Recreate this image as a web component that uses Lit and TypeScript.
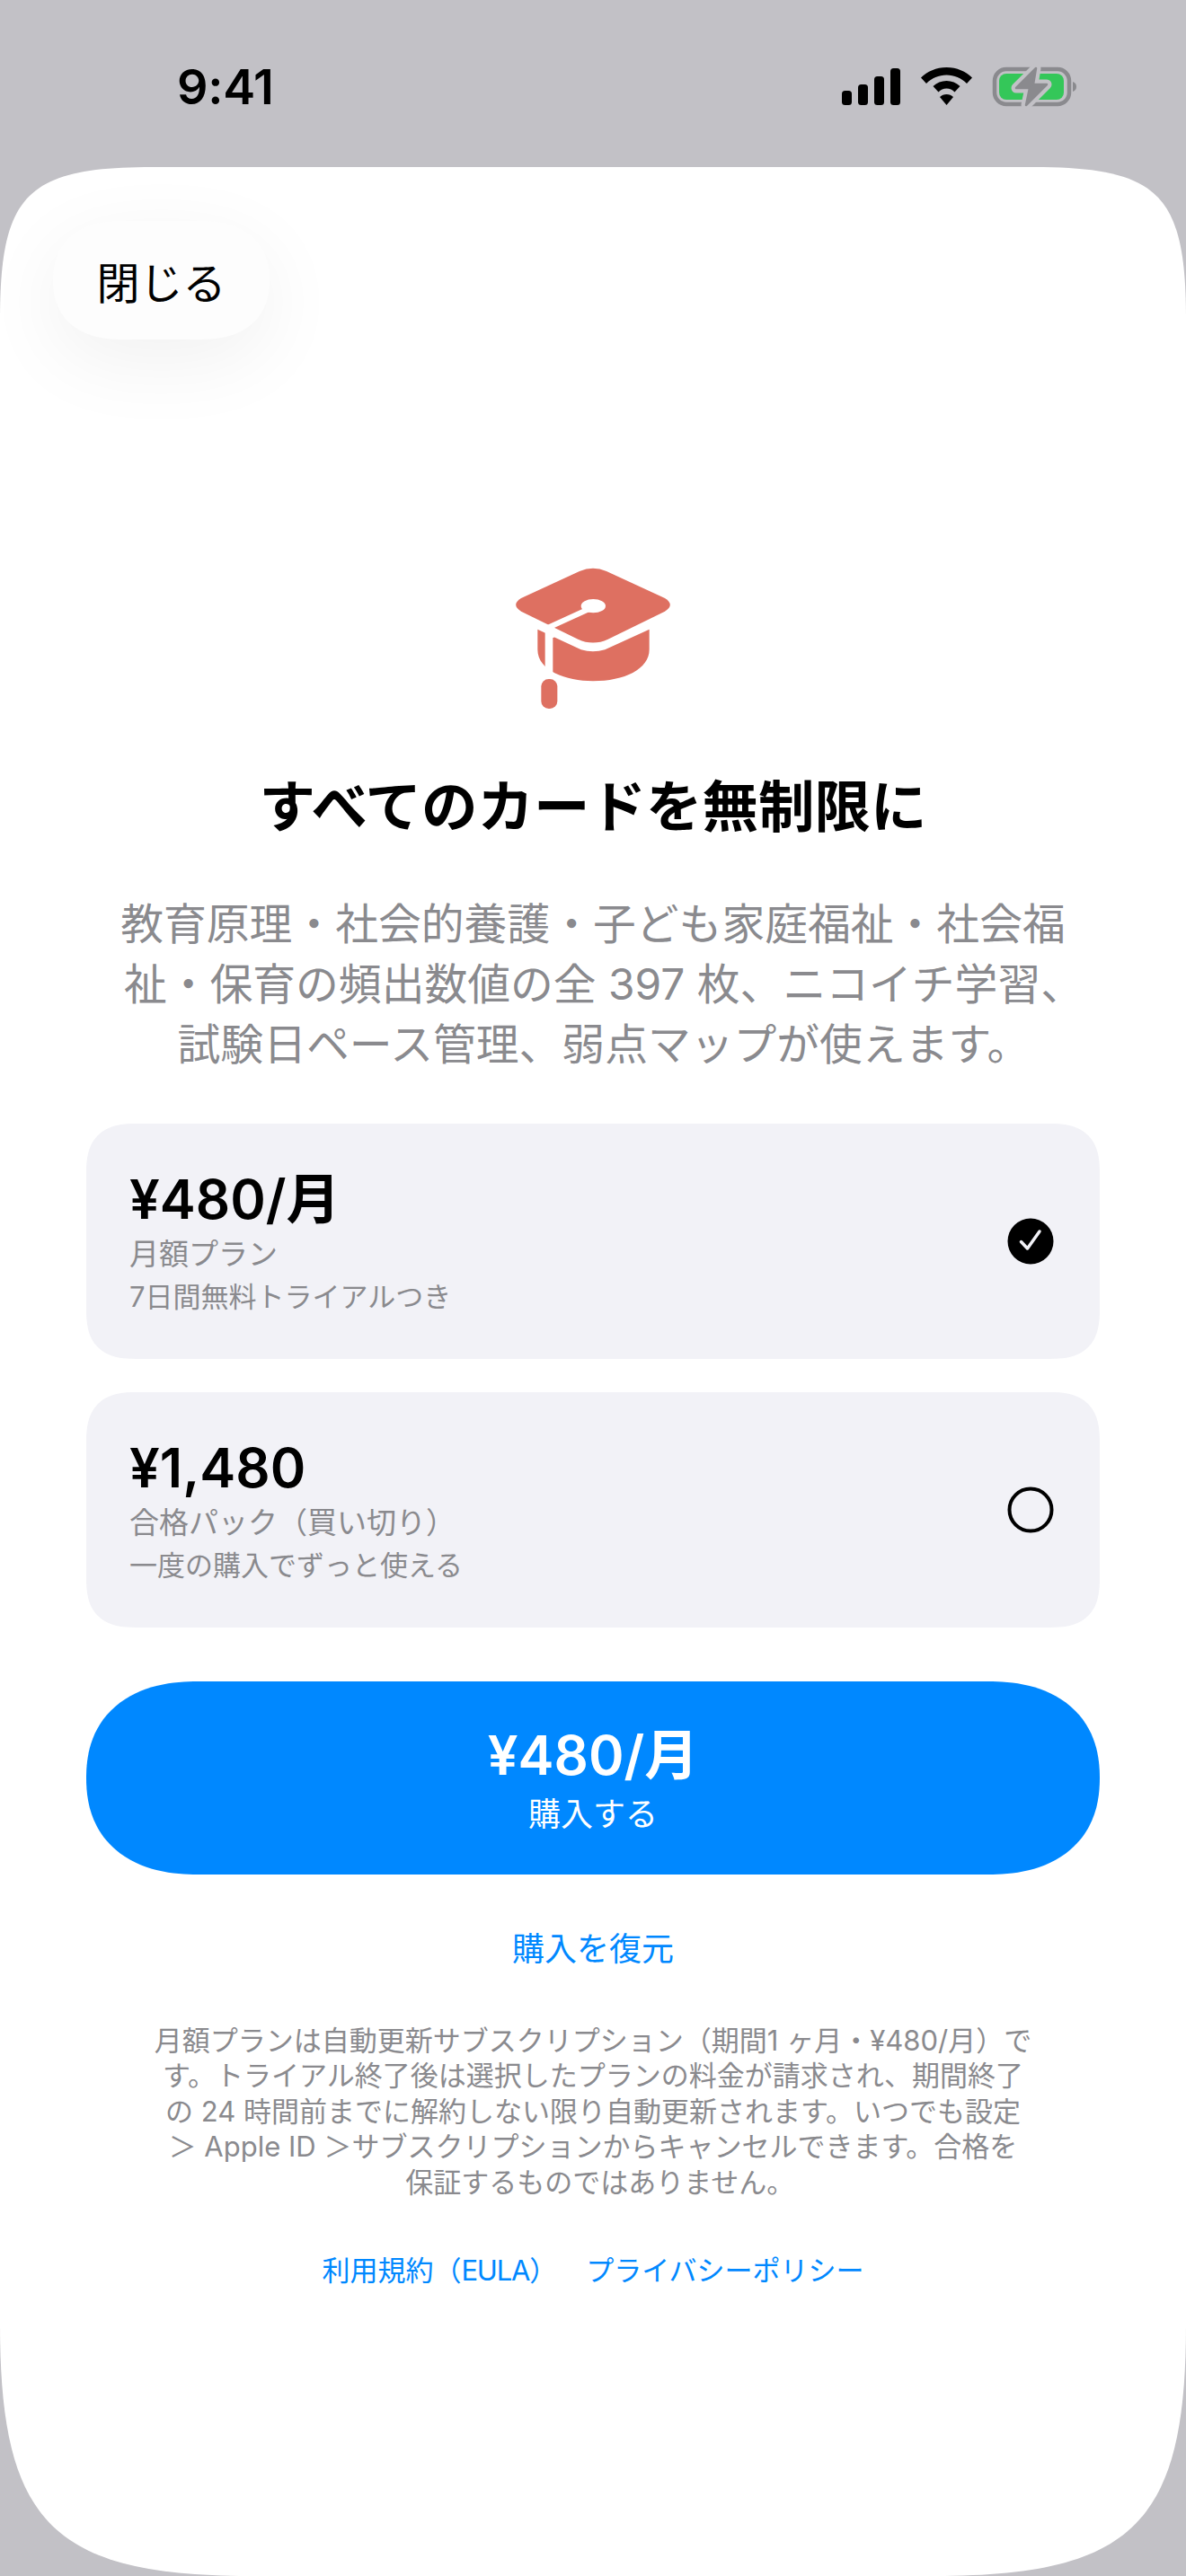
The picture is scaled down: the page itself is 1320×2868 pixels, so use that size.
import { LitElement, html, css } from "lit";
import { customElement } from "lit/decorators.js";

@customElement("app-root")
export class AppRoot extends LitElement {
  static styles = css`
    :host { display: block; width: 1320px; height: 2868px; background: #c2c1c6; overflow: hidden; font-family: "Inter", "Noto Sans CJK JP", sans-serif; }
    .status { height: 186px; box-sizing: border-box; position: relative; padding: 70px 0 0 197px; }
    .time { display: block; font-size: 54px; font-weight: 600; line-height: 54px; color: #000; letter-spacing: -0.3px; }
    .status-icons { display: block; position: absolute; left: 930px; top: 70px; }
    .sheet { height: 2682px; background: #fff; position: relative; display: flex; flex-direction: column; align-items: center; box-sizing: border-box; padding: 424px 96px 0;
      clip-path: path("M0 170 C0 30 30 0 170 0 L1150 0 C1290 0 1320 30 1320 170 L1320 2402 C1320 2623 1261 2682 1040 2682 L280 2682 C59 2682 0 2623 0 2402 Z"); }
    .close { position: absolute; left: 59px; top: 60px; width: 241px; height: 132px; border-radius: 76px / 66px; corner-shape: superellipse(1.2); background: #fdfdfd; box-shadow: 0 24px 90px rgba(0,0,0,.06); font-size: 48px; color: #000; display: flex; align-items: center; justify-content: center; }
    .cap { display: block; width: 240px; height: 200px; }
    h1 { margin: 52px 0 0; font-size: 62.5px; font-weight: 700; line-height: 72px; color: #000; text-align: center; }
    .lead { margin: 62px 0 0; font-size: 47.8px; line-height: 67px; color: #8a8a8e; text-align: center; width: 1128px; white-space: nowrap; }
    .hang { margin-right: -0.5em; }
    .cards { margin-top: 54px; width: 100%; display: flex; flex-direction: column; gap: 37px; }
    .card { height: 262px; background: #f2f2f7; border-radius: 56px; corner-shape: superellipse(1.4); display: flex; align-items: center; justify-content: space-between; padding: 0 49px 0 48px; box-sizing: border-box; }
    .price { font-size: 60px; font-weight: 600; line-height: 72px; color: #000; }
    .s1 { font-size: 33px; line-height: 42px; color: #8a8a8e; margin-top: 4px; }
    .s2 { font-size: 31px; line-height: 42px; color: #8a8a8e; margin-top: 6px; }
    .radio { display: block; width: 56px; height: 56px; }
    .buy { margin-top: 60px; width: 100%; height: 215px; border-radius: 124px / 107.5px; corner-shape: superellipse(1.2); background: #0088ff; color: #fff; display: flex; flex-direction: column; align-items: center; justify-content: center; }
    .buy .p { font-size: 60px; font-weight: 600; line-height: 72px; }
    .buy .t { font-size: 36px; line-height: 44px; margin-top: 8px; }
    .restore { margin-top: 61px; font-size: 36px; line-height: 44px; color: #0088ff; }
    .legal { margin-top: 60px; font-size: 31px; line-height: 39.4px; color: #8a8a8e; text-align: center; white-space: nowrap; }
    .links { margin-top: 59px; display: flex; gap: 32px; font-size: 31px; line-height: 40px; color: #0088ff; }
    .eula { letter-spacing: -1.2px; }
  `;

  capIcon() {
    return html`<svg class="cap" viewBox="0 0 720 600" aria-hidden="true">
      <path fill="#de7061" d="M175 272 L320 340 Q360 352 400 340 L548 272 V340 C548 405 465 445 360 445 C270 445 175 410 175 340 Z"/>
      <path fill="#de7061" d="M315 78 Q360 58 405 78 L600 168 Q635 190 600 212 L410 305 Q360 328 310 305 L120 212 Q85 190 120 168 Z"/>
      <path fill="none" stroke="#fff" stroke-width="18" d="M345 205 L207 268"/>
      <ellipse cx="361" cy="194" rx="41" ry="23" fill="#fff"/>
      <path fill="#fff" d="M198 254 L230 270 V300 H226 V440 H200 V280 L175 268 Z"/>
      <rect x="187" y="438" width="54" height="99" rx="25" fill="#de7061"/>
    </svg>`;
  }

  statusIcons() {
    return html`<svg class="status-icons" width="280" height="56" viewBox="930 70 280 56" aria-hidden="true">
      <rect x="937" y="101" width="11" height="16" rx="3.5"/><rect x="955" y="94" width="11" height="23" rx="3.5"/>
      <rect x="973" y="85" width="11" height="32" rx="3.5"/><rect x="991" y="76" width="11" height="41" rx="3.5"/>
      <path d="M1053.5 75 C1065 75 1075 79.5 1082 86.5 L1076 93 C1070 87 1062 83.5 1053.5 83.5 C1045 83.5 1037 87 1031 93 L1025 86.5 C1032 79.5 1042 75 1053.5 75 Z"/>
      <path d="M1053.5 90 C1059 90 1064.5 92 1068.5 96 L1062.5 102.5 C1060 100 1057 98.5 1053.5 98.5 C1050 98.5 1047 100 1044.5 102.5 L1038.5 96 C1042.5 92 1048 90 1053.5 90 Z"/>
      <path d="M1053.5 105 C1056.5 105 1059 106 1061 108 L1053.5 117 L1046 108 C1048 106 1050.5 105 1053.5 105 Z"/>
      <rect x="1107" y="77" width="83" height="39" rx="13" fill="none" stroke="#8a8a8e" stroke-width="4.5"/>
      <path d="M1194 91 C1197 92 1198 94 1198 96.5 C1198 99 1197 101 1194 102 Z" fill="#8a8a8e"/>
      <rect x="1112" y="82" width="72" height="29" rx="8" fill="#34c759"/>
      <path d="M1153 76 L1131 98 L1146 98 L1142 117 L1165 94 L1150 94 Z" fill="#c2c1c6" stroke="#c2c1c6" stroke-width="11" stroke-linejoin="round"/>
      <path d="M1153 76 L1131 98 L1146 98 L1142 117 L1165 94 L1150 94 Z" fill="#8a8a8e" stroke="#8a8a8e" stroke-width="2.5" stroke-linejoin="round"/>
    </svg>`;
  }

  radio(on: boolean) {
    return on
      ? html`<svg class="radio" viewBox="0 0 56 56" aria-hidden="true"><circle cx="28" cy="28" r="25.5"/><path d="M17.5 28.5 L24.5 36 L38 17" fill="none" stroke="#f2f2f7" stroke-width="3.5" stroke-linecap="round" stroke-linejoin="round"/></svg>`
      : html`<svg class="radio" viewBox="0 0 56 56" aria-hidden="true"><circle cx="28" cy="28" r="23.5" fill="none" stroke="#000" stroke-width="4"/></svg>`;
  }

  render() {
    return html`
      <div class="status"><span class="time">9:41</span>${this.statusIcons()}</div>
      <main class="sheet">
        <div class="close">閉じる</div>
        ${this.capIcon()}
        <h1>すべてのカードを無制限に</h1>
        <p class="lead">教育原理・社会的養護・子ども家庭福祉・社会福<br>祉・保育の頻出数値の全 397 枚、ニコイチ学習<span class="hang">、</span><br>試験日ペース管理、弱点マップが使えます<span class="hang">。</span></p>
        <div class="cards">
          <div class="card"><div><div class="price">¥480/月</div><div class="s1">月額プラン</div><div class="s2">7日間無料トライアルつき</div></div>${this.radio(true)}</div>
          <div class="card"><div><div class="price">¥1,480</div><div class="s1">合格パック（買い切り）</div><div class="s2">一度の購入でずっと使える</div></div>${this.radio(false)}</div>
        </div>
        <div class="buy"><div class="p">¥480/月</div><div class="t">購入する</div></div>
        <div class="restore">購入を復元</div>
        <div class="legal">月額プランは自動更新サブスクリプション（期間1 ヶ月・¥480/月）で<br>す。トライアル終了後は選択したプランの料金が請求され、期間終了<br>の 24 時間前までに解約しない限り自動更新されます。いつでも設定<br>＞ Apple ID ＞サブスクリプションからキャンセルできます。合格を<br>保証するものではありません<span class="hang">。</span></div>
        <div class="links"><span>利用規約（<span class="eula">EULA</span>）</span><span>プライバシーポリシー</span></div>
      </main>
    `;
  }
}
